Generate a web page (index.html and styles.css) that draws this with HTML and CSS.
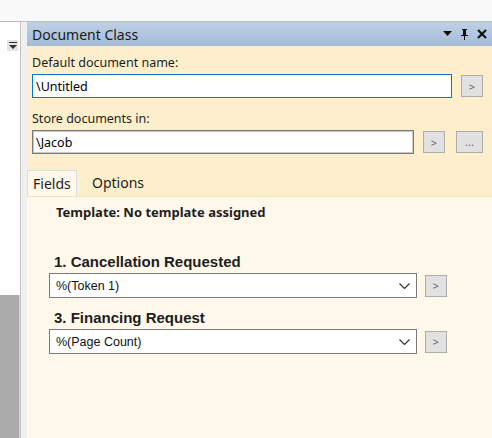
FILE: index.html
```html
<!DOCTYPE html>
<html lang="en">
<head>
    <meta charset="UTF-8">
    <title>Document Class</title>
    <link rel="stylesheet" href="styles.css">
</head>
<body>
    <div class="topbar"></div>
    <div class="main">
        <div class="leftpane">
            <div class="leftlist">
                <button class="mini-drop">
                    <svg width="8" height="7" viewBox="0 0 8 7"><rect x="0" y="0" width="8" height="1" fill="#333"/><path d="M0 3h8L4 7z" fill="#333"/></svg>
                </button>
            </div>
            <div class="leftgrey"></div>
        </div>
        <div class="splitter"></div>
        <div class="dock">
            <div class="titlebar">
                <span class="title">Document Class</span>
                <span class="title-icons">
                    <svg width="9" height="6" viewBox="0 0 9 6"><path d="M0 0h9L4.5 5z" fill="#111"/></svg>
                    <svg width="9" height="11" viewBox="0 0 9 11"><path d="M2 0h5v1H6v5h2v1H5v4H4V7H1V6h2V1H2z" fill="#111"/><rect x="4" y="1" width="1" height="5" fill="#111"/></svg>
                    <svg width="10" height="10" viewBox="0 0 10 10"><path d="M1 1l8 8M9 1L1 9" stroke="#111" stroke-width="2.2"/></svg>
                </span>
            </div>
            <div class="dock-body">
                <label class="field-label">Default document name:</label>
                <div class="row">
                    <input type="text" class="textbox focused name-box" value="\Untitled">
                    <button class="btn arrow">&gt;</button>
                </div>
                <label class="field-label store-label">Store documents in:</label>
                <div class="row">
                    <input type="text" class="textbox store-box" value="\Jacob">
                    <button class="btn arrow">&gt;</button>
                    <button class="btn dots">...</button>
                </div>
                <div class="tabs">
                    <div class="tab active">Fields</div>
                    <div class="tab">Options</div>
                </div>
            </div>
            <div class="tab-page">
                <div class="template">Template: No template assigned</div>
                <div class="field">
                    <div class="field-title">1. Cancellation Requested</div>
                    <div class="row">
                        <div class="select">%(Token 1)<svg class="chev" width="11" height="6" viewBox="0 0 11 6"><path d="M0.5 0.5l5 5 5-5" fill="none" stroke="#333" stroke-width="1.2"/></svg></div>
                        <button class="btn arrow small">&gt;</button>
                    </div>
                </div>
                <div class="field">
                    <div class="field-title">3. Financing Request</div>
                    <div class="row">
                        <div class="select">%(Page Count)<svg class="chev" width="11" height="6" viewBox="0 0 11 6"><path d="M0.5 0.5l5 5 5-5" fill="none" stroke="#333" stroke-width="1.2"/></svg></div>
                        <button class="btn arrow small">&gt;</button>
                    </div>
                </div>
            </div>
        </div>
    </div>
</body>
</html>
```

FILE: styles.css
```css
body {
    margin: 0;
    width: 492px;
    height: 438px;
    overflow: hidden;
    background: #f0f0f0;
    font-family: "Noto Sans", "Open Sans", sans-serif;
    font-size: 12.5px;
    color: #1e1e1e;
}
.topbar {
    height: 21px;
    background: #f9f9f9;
    border-bottom: 1px solid #bdbdbd;
}
.main {
    display: flex;
    height: 416px;
}
.leftpane {
    width: 20px;
    display: flex;
    flex-direction: column;
}
.leftlist {
    height: 273px;
    background: #fff;
    position: relative;
}
.mini-drop {
    position: absolute;
    left: 7px;
    top: 18px;
    width: 11px;
    height: 11px;
    padding: 0;
    border: none;
    background: #e4e4e4;
    display: flex;
    align-items: center;
    justify-content: center;
}
.leftgrey {
    flex: 1;
    background: #ababab;
    border-right: 1px solid #d8d8d8;
}
.splitter {
    width: 7px;
    background: #f0f0f0;
    border-left: 1px solid #c3c3c3;
    box-sizing: border-box;
}
.dock {
    flex: 1;
    display: flex;
    flex-direction: column;
    background: #fdefcc;
}
.titlebar {
    height: 24px;
    display: flex;
    align-items: center;
    justify-content: space-between;
    padding: 0 5px;
    background: linear-gradient(#bfd0e5, #a4bcd9);
}
.title {
    font-size: 14px;
    color: #1a1a1a;
}
.title-icons {
    display: flex;
    align-items: center;
    gap: 8px;
}
.dock-body {
    padding: 9px 0 0 5px;
}
.field-label {
    display: block;
    line-height: 16px;
    height: 19px;
}
.store-label {
    margin-top: 13px;
}
.row {
    display: flex;
    align-items: center;
}
.textbox {
    height: 24px;
    box-sizing: border-box;
    border: 1px solid #7a7a7a;
    box-shadow: inset 0 0 0 1px #c8c8c8;
    background: #fff;
    font-family: "Noto Sans", sans-serif;
    font-size: 12.5px;
    color: #000;
    padding: 0 3px;
    outline: none;
}
.focused {
    border-color: #0078d7;
    box-shadow: none;
}
.name-box {
    width: 420px;
}
.store-box {
    width: 382px;
}
.btn {
    height: 22px;
    box-sizing: border-box;
    border: 1px solid #adadad;
    background: #e1e1e1;
    padding: 0;
    font-family: "Noto Sans", sans-serif;
    font-size: 11px;
    color: #6c5a7a;
    margin-left: 9px;
}
.arrow {
    width: 22px;
}
.dots {
    width: 27px;
    margin-left: 11px;
    line-height: 10px;
}
.tabs {
    display: flex;
    margin-top: 16px;
    margin-left: -5px;
    height: 26px;
}
.tab {
    padding: 0 0 0 15px;
    line-height: 26px;
    font-size: 14px;
}
.tab.active {
    background: #fff8eb;
    border: 1px solid #d5dde6;
    border-bottom: none;
    width: 50px;
    box-sizing: border-box;
    padding: 0 5px;
}
.tab-page {
    flex: 1;
    background: #fff8eb;
    border-top: 1px solid #f6e2bb;
    padding-left: 22px;
}
.template {
    font-weight: bold;
    font-size: 13px;
    padding: 7px 0 0 7px;
    line-height: 16px;
    height: 32px;
}
.field {
    margin-top: 17px;
}
.field + .field {
    margin-top: 11px;
}
.field-title {
    font-family: "Liberation Sans", Arial, sans-serif;
    font-weight: bold;
    font-size: 15px;
    line-height: 18px;
    padding: 0 0 2px 5px;
}
.select {
    width: 368px;
    height: 25px;
    box-sizing: border-box;
    border: 1px solid #7a7a7a;
    background: #fff;
    display: flex;
    align-items: center;
    justify-content: space-between;
    padding: 0 6px;
    font-family: "Liberation Sans", Arial, sans-serif;
    font-size: 12.5px;
    color: #111;
}
.small {
    margin-left: 8px;
}
```
